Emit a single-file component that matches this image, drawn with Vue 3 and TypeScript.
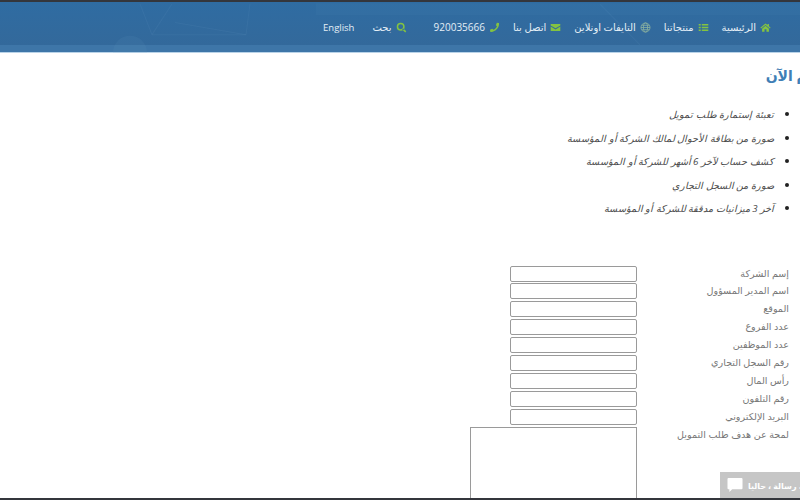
<template>
  <div class="page" dir="rtl">
    <header class="topbar">
      <svg class="pattern" viewBox="0 0 800 50" preserveAspectRatio="none" aria-hidden="true">
        <g fill="none" stroke="#6f9fc4" stroke-opacity="0.12">
          <path d="M140 2 L152 32 L246 32 L250 2" />
          <path d="M152 32 L172 2 M175 20 L246 32" />
          <path d="M600 2 L640 42" />
        </g>
        <circle cx="130" cy="50" r="17" fill="#6f9fc4" fill-opacity="0.1" />
        <rect x="316" y="1" width="484" height="12" fill="#5d93bf" fill-opacity="0.08" />
      </svg>
      <nav class="nav">
        <a v-for="item in navItems" :key="item.label" class="nav-item" :class="item.cls">
          <svg class="icon" viewBox="0 0 16 16" aria-hidden="true">
            <path v-if="item.icon === 'home'" d="M8 2 L0.5 8.4 L1.6 9.6 L8 4.2 L14.4 9.6 L15.5 8.4 L13 6.2 V2.8 H11 V4.5 Z M3 9.8 V14 H6.6 V10.6 H9.4 V14 H13 V9.8 L8 5.6 Z" />
            <path v-else-if="item.icon === 'list'" d="M1 3 H4 V5.2 H1 Z M5.5 3 H15 V5.2 H5.5 Z M1 7 H4 V9.2 H1 Z M5.5 7 H15 V9.2 H5.5 Z M1 11 H4 V13.2 H1 Z M5.5 11 H15 V13.2 H5.5 Z" />
            <g v-else-if="item.icon === 'globe'" fill="none" stroke="currentColor" stroke-width="1.1">
              <circle cx="8" cy="8" r="6.6" />
              <ellipse cx="8" cy="8" rx="3" ry="6.6" />
              <path d="M1.4 8 H14.6 M2.4 4.8 H13.6 M2.4 11.2 H13.6" />
            </g>
            <path v-else-if="item.icon === 'mail'" d="M1 3 H15 V5 L8 9.2 L1 5 Z M1 6.6 L8 10.9 L15 6.6 V13.2 H1 Z" />
            <path v-else-if="item.icon === 'phone'" d="M14.6 1.6 L11.4 1 L10 4.6 L11.6 6 C11 7.8 8.8 10.4 6.4 11.4 L4.8 9.8 L1.4 11.2 L2 14.4 C8.6 15.4 15.4 8.4 14.6 1.6 Z" />
            <path v-else-if="item.icon === 'search'" fill-rule="evenodd" d="M6.8 1 A5.8 5.8 0 1 1 6.8 12.6 A5.8 5.8 0 1 1 6.8 1 Z M6.8 3.2 A3.6 3.6 0 1 0 6.8 10.4 A3.6 3.6 0 1 0 6.8 3.2 Z M10.6 9.4 L15 13.6 L13.4 15.2 L9 11 Z" />
          </svg>
          <span>{{ item.label }}</span>
        </a>
      </nav>
    </header>

    <main class="content">
      <h2 class="title">قدم الآن</h2>
      <ul class="docs">
        <li v-for="doc in documents" :key="doc">{{ doc }}</li>
      </ul>
      <form class="apply-form" @submit.prevent>
        <div v-for="field in fields" :key="field" class="row">
          <label>{{ field }}</label>
          <input type="text" />
        </div>
        <div class="row row-area">
          <label>لمحة عن هدف طلب التمويل</label>
          <textarea></textarea>
        </div>
      </form>
    </main>

    <div class="chat">
      <svg class="chat-icon" viewBox="0 0 16 16" aria-hidden="true">
        <path d="M1 0 H15 Q16 0 16 1 V11 Q16 12 15 12 H5 L2 15 V12 H1 Q0 12 0 11 V1 Q0 0 1 0 Z" />
      </svg>
      <span class="chat-text">اترك رسالة ، حاليا</span>
    </div>
    <div class="bottom-strip"></div>
  </div>
</template>

<script setup lang="ts">
interface NavItem {
  label: string;
  icon: string;
  cls?: string;
}

const navItems: NavItem[] = [
  { label: "الرئيسية", icon: "home" },
  { label: "منتجاتنا", icon: "list" },
  { label: "التايفات اونلاين", icon: "globe", cls: "muted-icon" },
  { label: "اتصل بنا", icon: "mail" },
  { label: "920035666", icon: "phone", cls: "phone" },
  { label: "بحث", icon: "search", cls: "search" },
  { label: "English", icon: "", cls: "lang" }
];

const documents = [
  "تعبئة إستمارة طلب تمويل",
  "صورة من بطاقة الأحوال لمالك الشركة أو المؤسسة",
  "كشف حساب لآخر 6 أشهر للشركة أو المؤسسة",
  "صورة من السجل التجاري",
  "آخر 3 ميزانيات مدققة للشركة أو المؤسسة"
];

const fields = [
  "إسم الشركة",
  "اسم المدير المسؤول",
  "الموقع",
  "عدد الفروع",
  "عدد الموظفين",
  "رقم السجل التجاري",
  "رأس المال",
  "رقم التلفون",
  "البريد الإلكتروني"
];
</script>

<style>
html,
body {
  margin: 0;
  background: #fff;
}
</style>

<style scoped>
.page {
  position: relative;
  display: flex;
  flex-direction: column;
  width: 800px;
  height: 500px;
  overflow: hidden;
  background: #fff;
  border-top: 2px solid #34363c;
  box-sizing: border-box;
  font-family: "Open Sans", "DejaVu Sans", sans-serif;
}

.topbar {
  position: relative;
  flex: none;
  height: 51px;
  padding-bottom: 1px;
  box-sizing: border-box;
  background: linear-gradient(#2f6ca2 0, #33699b 84%, #3e76a8 84%, #3e76a8 98%, #b9d3e8 98%);
}

.pattern {
  position: absolute;
  inset: 0;
  width: 100%;
  height: 100%;
}

.nav {
  position: relative;
  display: flex;
  align-items: center;
  height: 100%;
  padding-right: 29px;
  color: #e4eef6;
  font-size: 10px;
}

.nav-item {
  display: flex;
  align-items: center;
  gap: 4px;
  margin-left: 13px;
  white-space: nowrap;
}

.icon {
  width: 11px;
  height: 11px;
  flex: none;
  fill: currentColor;
  color: #83c341;
}

.muted-icon .icon {
  color: #8fb4a0;
}

.phone {
  margin-left: 27px;
}

.search {
  margin-left: 18px;
}

.lang {
  font-size: 9.5px;
}

.lang .icon {
  display: none;
}

.content {
  flex: 1;
  min-height: 0;
}

.title {
  margin: 13px -24px 0 0;
  color: #3f7fb6;
  font-size: 14px;
  font-weight: 700;
  line-height: 20px;
}

.docs {
  margin: 16px 0 0;
  padding: 0 26px 0 0;
  color: #4a4a4a;
  font-size: 9.7px;
  font-style: italic;
  line-height: 23.5px;
}

.docs li {
  height: 23.5px;
}

.docs li::marker {
  color: #222;
  font-size: 12px;
}

.apply-form {
  margin-top: 46px;
  padding-right: 11px;
  color: #777;
  font-size: 9.6px;
}

.row {
  display: flex;
  align-items: flex-start;
  height: 17.9px;
}

.row label {
  width: 152px;
  flex: none;
  line-height: 16px;
}

.row input {
  width: 127px;
  height: 16px;
  padding: 0;
  box-sizing: border-box;
  border: 1px solid #9a9a9a;
  border-radius: 2px;
  background: #fff;
}

.row-area {
  height: 90px;
}

.row-area textarea {
  display: block;
  width: 167px;
  height: 90px;
  padding: 0;
  box-sizing: border-box;
  border: 1px solid #9a9a9a;
  border-radius: 0;
  resize: none;
  background: #fff;
}

.chat {
  position: absolute;
  right: 0;
  bottom: 2px;
  display: flex;
  align-items: center;
  width: 80px;
  height: 26px;
  direction: ltr;
  padding-left: 7px;
  box-sizing: border-box;
  overflow: hidden;
  background: #c6c6c6;
  color: #fff;
  font-size: 8px;
  font-weight: 700;
}

.chat-icon {
  flex: none;
  width: 16px;
  height: 15px;
  fill: #fff;
  margin-right: 5px;
}

.chat-text {
  flex: none;
  direction: rtl;
  white-space: nowrap;
}

.bottom-strip {
  position: absolute;
  right: 0;
  bottom: 0;
  left: 0;
  height: 2px;
  background: #34363c;
}
</style>
